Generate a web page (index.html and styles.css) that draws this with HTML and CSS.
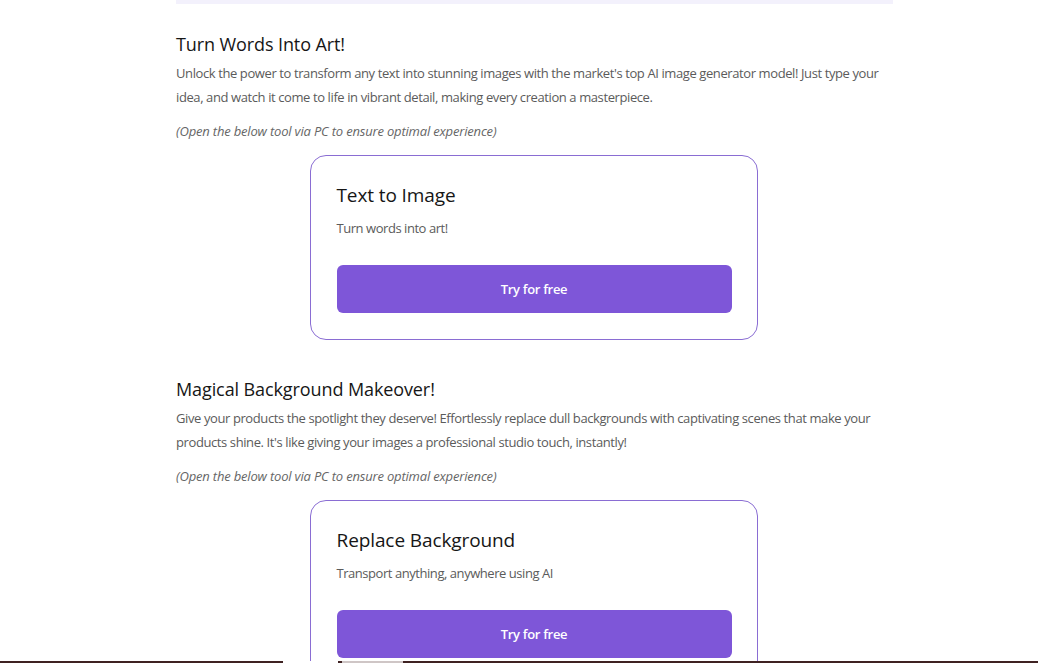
FILE: index.html
```html
<!DOCTYPE html>
<html lang="en">
<head>
<meta charset="utf-8">
<title>AI Tools</title>
<link rel="stylesheet" href="styles.css">
</head>
<body>
<div class="page">
  <div class="topbar"></div>

  <section class="section">
    <h2 class="sec-title">Turn Words Into Art!</h2>
    <p class="sec-text">Unlock the power to transform any text into stunning images with the market's top AI image generator model! Just type your idea, and watch it come to life in vibrant detail, making every creation a masterpiece.</p>
    <p class="sec-note">(Open the below tool via PC to ensure optimal experience)</p>
    <div class="card">
      <h3 class="card-title">Text to Image</h3>
      <p class="card-text">Turn words into art!</p>
      <button class="card-btn">Try for free</button>
    </div>
  </section>

  <section class="section">
    <h2 class="sec-title">Magical Background Makeover!</h2>
    <p class="sec-text">Give your products the spotlight they deserve! Effortlessly replace dull backgrounds with captivating scenes that make your products shine. It's like giving your images a professional studio touch, instantly!</p>
    <p class="sec-note">(Open the below tool via PC to ensure optimal experience)</p>
    <div class="card">
      <h3 class="card-title">Replace Background</h3>
      <p class="card-text">Transport anything, anywhere using AI</p>
      <button class="card-btn">Try for free</button>
    </div>
  </section>
</div>
<div class="bottom-strip">
  <span class="strip-white"></span>
  <span class="strip-gray"></span>
</div>
</body>
</html>
```

FILE: styles.css
```css
* { box-sizing: border-box; }
html, body { margin: 0; padding: 0; background: #ffffff; }
body {
  font-family: "Open Sans", "Noto Sans", sans-serif;
  color: #1b1b1b;
  overflow: hidden;
  height: 663px;
}
.page {
  width: 717px;
  margin-left: 176px;
}
.topbar {
  height: 4px;
  background: #f3f1fc;
}
.section {
  display: flex;
  flex-direction: column;
}
.section + .section { margin-top: 37px; }
.section:first-of-type { margin-top: 28px; }
.sec-title {
  margin: 0;
  font-size: 18px;
  line-height: 24px;
  font-weight: 500;
  color: #161616;
  letter-spacing: -0.1px;
}
.sec-text {
  margin: 5px 0 0;
  font-size: 13px;
  line-height: 24px;
  color: #5b5b5b;
  letter-spacing: -0.4px;
}
.sec-note {
  margin: 10px 0 0;
  font-size: 13px;
  line-height: 24px;
  font-style: italic;
  color: #666666;
  letter-spacing: -0.18px;
}
.card {
  align-self: center;
  margin-top: 12px;
  width: 448px;
  border: 1px solid #8a6dd3;
  border-radius: 16px;
  padding: 26px 25px 26px 26px;
  display: flex;
  flex-direction: column;
  transform: translateX(-1px);
}
.card-title {
  margin: 0;
  font-size: 19px;
  line-height: 26px;
  font-weight: 500;
  color: #161616;
  letter-spacing: -0.1px;
}
.card-text {
  margin: 10px 0 0;
  font-size: 13px;
  line-height: 20px;
  color: #5b5b5b;
  letter-spacing: -0.45px;
}
.card-btn {
  margin-top: 27px;
  height: 48px;
  border: none;
  border-radius: 6px;
  background: #7e56d8;
  color: #ffffff;
  font-family: inherit;
  font-size: 13px;
  font-weight: 600;
  letter-spacing: -0.3px;
  cursor: pointer;
}
.bottom-strip {
  position: fixed;
  left: 0;
  right: 0;
  bottom: 0;
  height: 2px;
  background: #3f2222;
}
.strip-white {
  position: absolute;
  left: 283px;
  top: 0;
  width: 55px;
  height: 2px;
  background: #ffffff;
}
.strip-gray {
  position: absolute;
  left: 342px;
  top: 0;
  width: 61px;
  height: 2px;
  background: #cfc6c6;
}
```
